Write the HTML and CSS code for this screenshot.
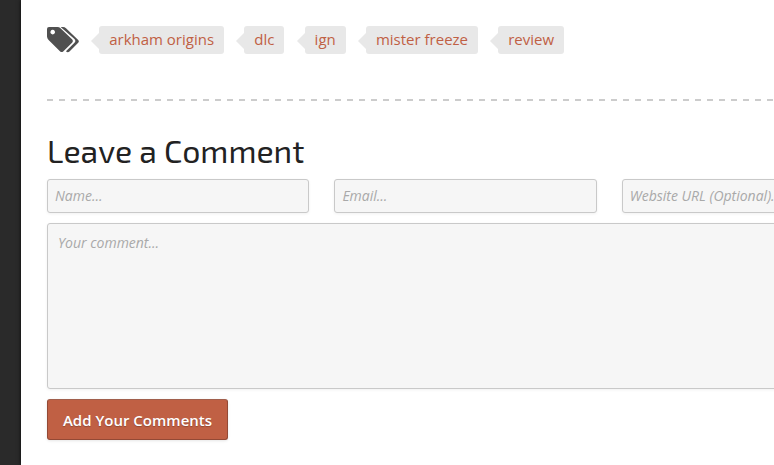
FILE: index.html
```html
<!DOCTYPE html>
<html lang="en">
<head>
<meta charset="utf-8">
<title>Leave a Comment</title>
<link rel="stylesheet" href="styles.css">
</head>
<body>
<main class="content">
  <div class="tags">
    <svg class="tags-icon" width="33" height="26" viewBox="0 0 33 26" aria-hidden="true">
      <path fill="#505050" fill-rule="evenodd" d="M2 0H10.500Q12.200 0 13.500 1.300L25.300 12.500Q26.600 14 25.300 15.400L16.200 24.400Q14.700 25.700 13.200 24.400L1.600 13Q0 11.400 0 9.500V2Q0 0 2 0ZM5.700 2.800a2.300 2.300 0 1 0 .01 0Z"/>
      <path fill="#505050" d="M13.600 0H16Q17.700 0 19 1.300L31.200 13Q32.500 14.300 31.200 15.700L22.500 24.600Q20.600 26.200 19 24.300L27.200 16.100Q29.400 14 27.400 12Z"/>
    </svg>
    <a class="tag">arkham origins</a>
    <a class="tag">dlc</a>
    <a class="tag">ign</a>
    <a class="tag">mister freeze</a>
    <a class="tag">review</a>
  </div>
  <div class="divider"></div>
  <h2 class="title">Leave a Comment</h2>
  <form class="form">
    <div class="fields">
      <input class="field" type="text" placeholder="Name...">
      <input class="field" type="text" placeholder="Email...">
      <input class="field" type="text" placeholder="Website URL (Optional)...">
    </div>
    <textarea class="field message" placeholder="Your comment..."></textarea>
    <button class="submit" type="button">Add Your Comments</button>
  </form>
</main>
</body>
</html>
```
FILE: styles.css
```css
* { box-sizing: border-box; }

html { overflow: hidden; background: #2a2a2a; }

body {
  margin: 0;
  height: 465px;
  overflow: hidden;
  font-family: "Open Sans", sans-serif;
}

.content {
  width: 889px;
  height: 465px;
  margin-left: 21px;
  padding: 26px;
  background: #fff;
  box-shadow: 0 0 4px rgba(0, 0, 0, .8);
}

.tags { display: flex; gap: 20.2px; height: 28px; }

.tags-icon { display: block; margin-top: 1px; margin-right: -1px; }

.tag {
  position: relative;
  padding: 0 10px;
  border-radius: 3px;
  background: #e8e8e8;
  color: #c06044;
  font-size: 15px;
  line-height: 27px;
  white-space: nowrap;
}

.tag::before {
  content: "";
  position: absolute;
  left: -8px;
  top: 7px;
  border: solid transparent;
  border-width: 8px 8px 8px 0;
  border-right-color: #e8e8e8;
}

.divider {
  height: 2px;
  margin-top: 45px;
  background: repeating-linear-gradient(90deg, #ccc 0 6px, transparent 6px 12px);
}

.title {
  margin: 29px 0 9px;
  color: #222;
  font-family: "Exo 2", "Open Sans", sans-serif;
  font-size: 32px;
  font-weight: 400;
  line-height: 40px;
  white-space: nowrap;
}

.form { display: flex; flex-direction: column; align-items: flex-start; gap: 10px; }

.fields { display: grid; grid-template-columns: repeat(3, 262.4px); gap: 25px; }

.field {
  width: 100%;
  height: 34px;
  margin: 0;
  padding: 0 7px 2px;
  border: 1px solid #c9c9c9;
  border-radius: 3px;
  background: #f6f6f6;
  box-shadow: 0 1px 3px rgba(0, 0, 0, .06);
  font: italic 14px/20px "Open Sans", sans-serif;
}

.field::placeholder { color: #a9a9a9; opacity: 1; }

.message { display: block; height: 166px; padding: 9px 10px; resize: none; }

.submit {
  width: 181px;
  height: 41px;
  padding: 0;
  border: 1px solid #934935;
  border-top-color: #a1604d;
  border-radius: 3px;
  background: #c06044;
  box-shadow: 0 1px 3px rgba(0, 0, 0, .1);
  color: #fff;
  font: 600 15px/20px "Open Sans", sans-serif;
  text-shadow: 0 1px 1px rgba(0, 0, 0, .25);
}
```
